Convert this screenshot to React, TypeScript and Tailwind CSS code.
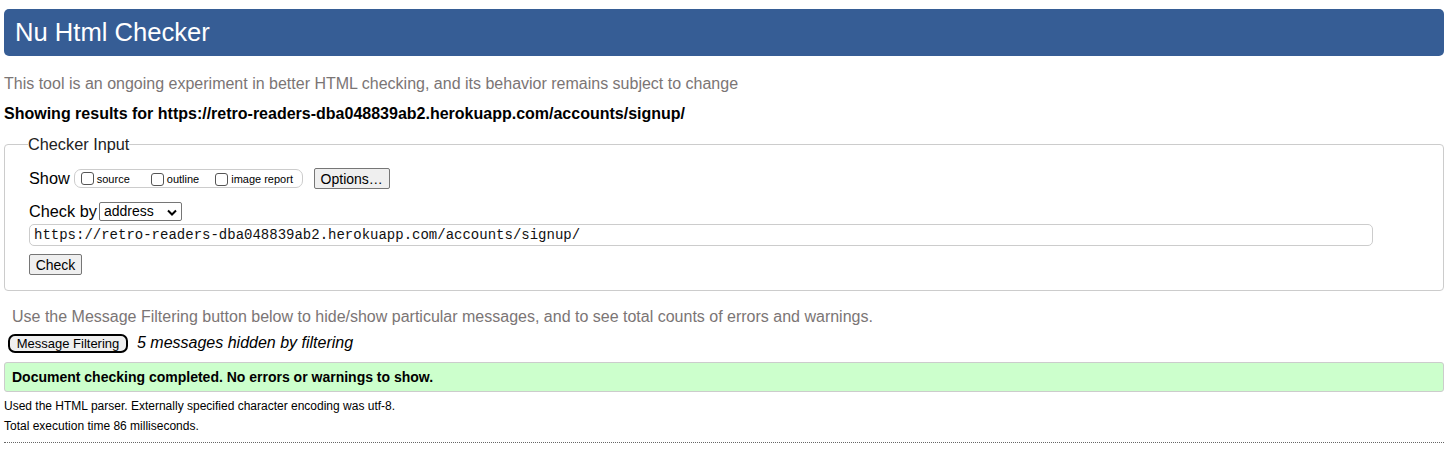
export default function App() {
  return (
    <div className="min-h-screen bg-white pl-[4px] pr-[7px] pt-[9px] text-black" style={{ fontFamily: '"Liberation Sans", Arial, sans-serif' }}>
      <header className="h-[47px] rounded-[5px] bg-[#365d95] pl-[11px] flex items-center">
        <h1 className="text-[25.6px] leading-none text-white">Nu Html Checker</h1>
      </header>

      <p className="mt-[19px] text-[16px] leading-[18px] text-[#7b7575]">
        This tool is an ongoing experiment in better HTML checking, and its behavior remains subject to change
      </p>
      <p className="mt-[12px] text-[16px] leading-[18px] font-bold">
        Showing results for https://retro-readers-dba048839ab2.herokuapp.com/accounts/signup/
      </p>

      <fieldset className="mt-[12px] h-[156px] rounded-[4px] border border-[#cccccc] px-[24px] pt-0 pb-0">
        <legend className="px-0 ml-[-1px] text-[16.3px] leading-[18px] text-[#222]">Checker Input</legend>

        <div className="mt-[15px] flex items-center h-[21px]">
          <span className="text-[16.3px] leading-none">Show</span>
          <div className="ml-[4px] flex items-center h-[19px] w-[229px] rounded-[7px] border border-[#cccccc] pl-[6px] text-[11px]">
            <Check />
            <span className="ml-[3px] mt-[2px]">source</span>
            <span className="ml-[21px]"><Check /></span>
            <span className="ml-[3px] mt-[2px]">outline</span>
            <span className="ml-[16px]"><Check /></span>
            <span className="ml-[3px] mt-[2px]">image report</span>
          </div>
          <button className="ml-[11px] h-[21px] w-[76px] rounded-[2px] border border-[#767676] bg-[#efefef] text-[14px] leading-none">
            Options…
          </button>
        </div>

        <div className="mt-[13px] flex items-center h-[19px]">
          <span className="text-[16.3px] leading-none">Check by</span>
          <div className="ml-[2px] flex items-center justify-between h-[19px] w-[83px] rounded-[2px] border border-[#767676] pl-[4px] pr-[4px] text-[14px]">
            <span>address</span>
            <svg width="10" height="7" viewBox="0 0 10 7" className="mt-[1px]">
              <path d="M1 1.5 L5 5.5 L9 1.5" fill="none" stroke="#000" strokeWidth="2" />
            </svg>
          </div>
        </div>

        <div className="mt-[3px] h-[22px] w-[1344px] rounded-[5px] border border-[#cccccc] pl-[4px] flex items-center text-[14px] text-[#111]" style={{ fontFamily: '"Liberation Mono", "DejaVu Sans Mono", monospace' }}>
          https://retro-readers-dba048839ab2.herokuapp.com/accounts/signup/
        </div>

        <button className="mt-[8px] h-[21px] w-[53px] rounded-[2px] border border-[#767676] bg-[#efefef] text-[14px] leading-none">
          Check
        </button>
      </fieldset>

      <p className="mt-[17px] pl-[8px] text-[16px] leading-[18px] text-[#7b7575]">
        Use the Message Filtering button below to hide/show particular messages, and to see total counts of errors and warnings.
      </p>

      <div className="mt-[5px] flex items-center">
        <button className="ml-[4px] h-[19px] w-[120px] rounded-[7px] border-2 border-black bg-[#efefef] text-[13px] leading-none">
          Message Filtering
        </button>
        <span className="ml-[9px] text-[16px] italic">5 messages hidden by filtering</span>
      </div>

      <div className="mt-[7px] h-[30px] rounded-[3px] border border-[#cccccc] bg-[#ccffcc] pl-[7px] flex items-center text-[14px] font-bold">
        Document checking completed. No errors or warnings to show.
      </div>

      <p className="mt-[7px] text-[12px] leading-[14px]">
        Used the HTML parser. Externally specified character encoding was utf-8.
      </p>
      <p className="mt-[6px] text-[12px] leading-[14px]">Total execution time 86 milliseconds.</p>

      <div className="mt-[9px] border-t border-dotted border-[#666]" />
    </div>
  );
}

function Check() {
  return <span className="inline-block h-[13px] w-[13px] rounded-[3px] border border-[#555] bg-white align-middle" />;
}
